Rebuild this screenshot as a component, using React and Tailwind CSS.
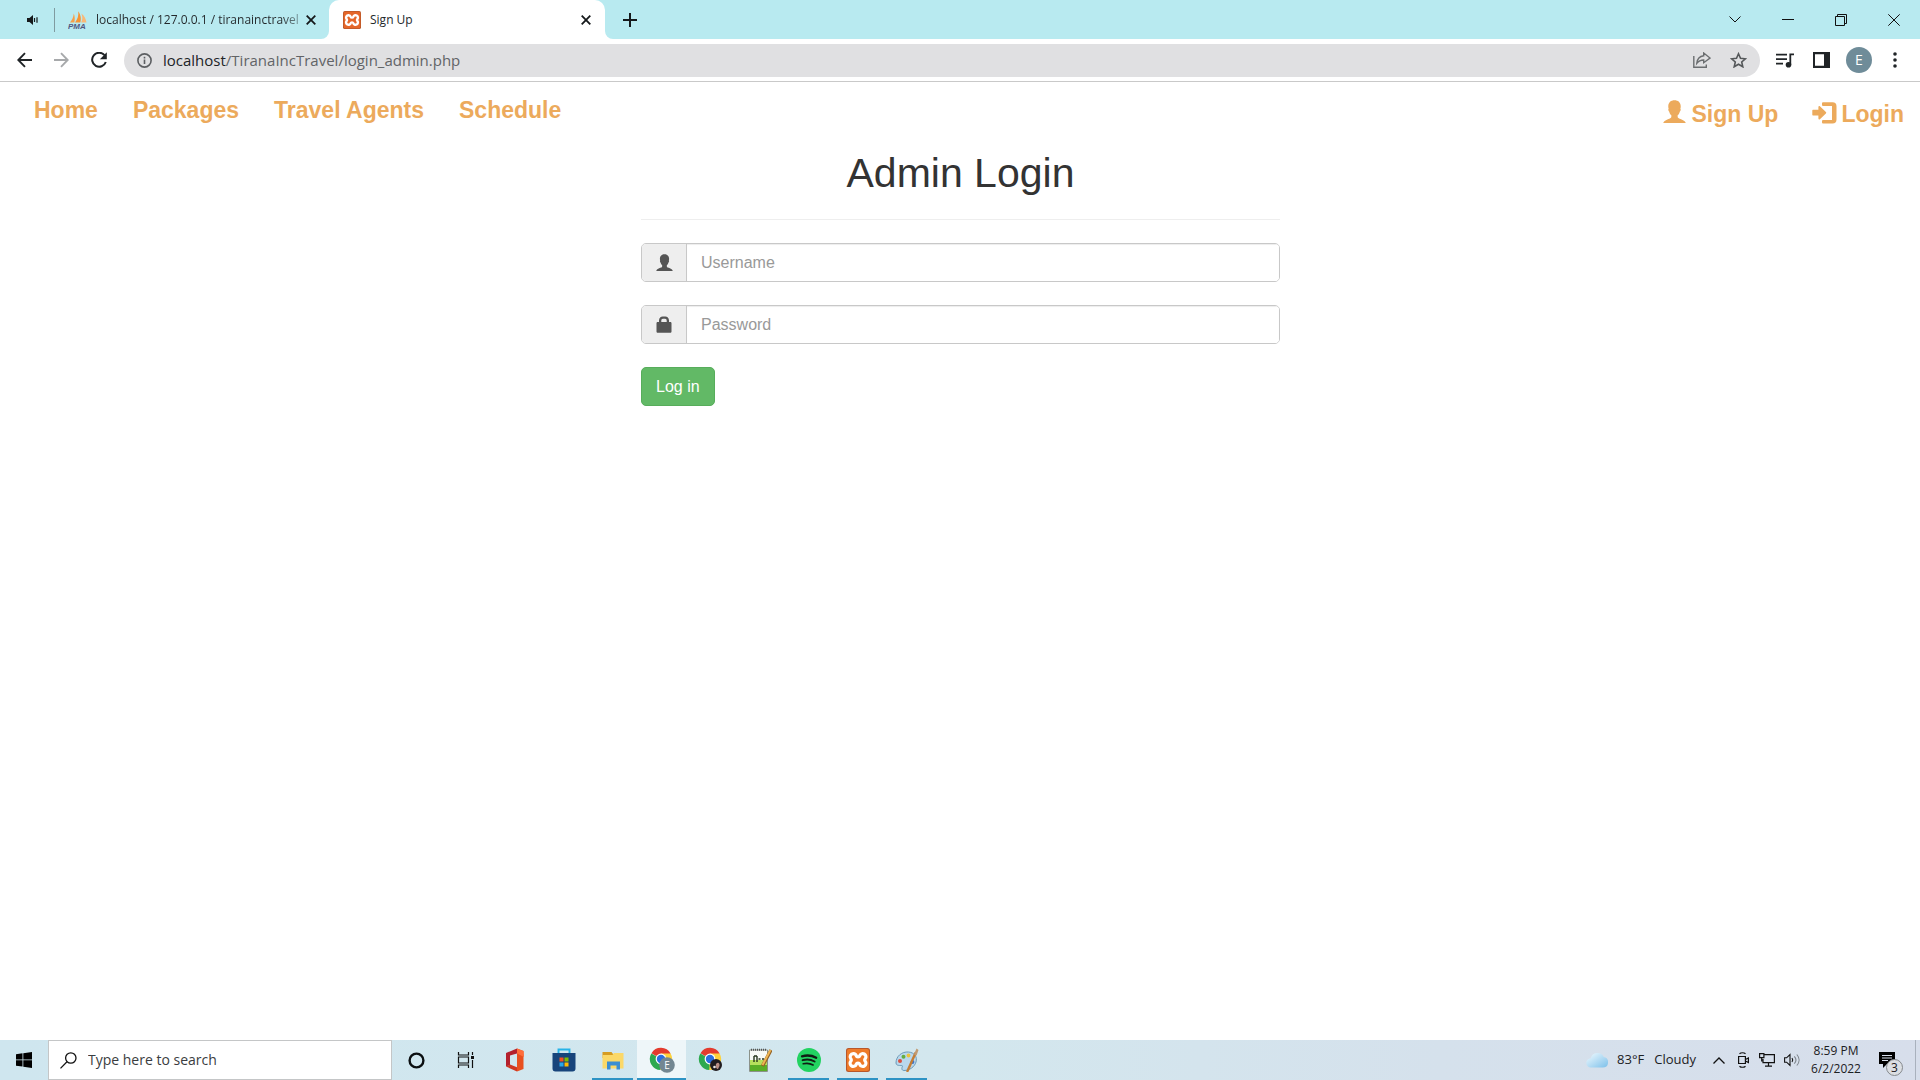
import React from "react";

const UI = "font-['Open_Sans','Noto_Sans',sans-serif]";

function CloseX({ size = 10 }) {
  return (
    <svg width={size} height={size} viewBox="0 0 10 10" fill="none" stroke="#15191b" strokeWidth="1.8">
      <path d="M.7.7l8.6 8.6M9.3.7L.7 9.3" />
    </svg>
  );
}

function Xampp({ size, bg = "#e5672a" }) {
  return (
    <svg width={size} height={size} viewBox="0 0 24 24">
      <rect width="24" height="24" rx="2.5" fill="#b9572a" />
      <rect x="1" y="1" width="22" height="22" rx="2" fill={bg} />
      <path
        transform="translate(12 12) scale(1.15) translate(-12 -12)"
        d="M8 6.500a2.800 2.800 0 0 0-2.200 4.600c.5.500.5 1.300 0 1.800A2.800 2.800 0 1 0 10.600 15.500c.3-1 2.500-1 2.800 0A2.800 2.800 0 1 0 18.200 12.900c-.5-.5-.5-1.300 0-1.800A2.800 2.800 0 1 0 13.400 8.500c-.3 1-2.500 1-2.800 0A2.800 2.800 0 0 0 8 6.500z"
        fill="none"
        stroke="#fff"
        strokeWidth="2.800"
        strokeLinejoin="round"
      />
    </svg>
  );
}

function UserGlyph({ className }) {
  return (
    <svg className={className} viewBox="0 0 24 24" fill="currentColor">
      <path d="M12 .3c3.700 0 6.500 2.200 6.500 6.200 0 1.200-.1 2-.4 2.700.6.300.5 1.900-.6 3-.5 1.700-1.200 3-2.200 3.800v1.600c0 .8.5 1.200 1.500 1.600 2.700 1 6 2.100 6.800 4.400v.8H.400v-.8c.8-2.300 4.100-3.400 6.800-4.400 1-.4 1.500-.8 1.500-1.600V16c-1-.8-1.700-2.100-2.200-3.800-1.100-1.100-1.200-2.700-.6-3-.3-.7-.4-1.500-.4-2.700C5.500 2.500 8.300.3 12 .3z" />
    </svg>
  );
}

function LoginGlyph() {
  return (
    <svg width="25" height="22" viewBox="0 0 25 22" fill="currentColor">
      <path d="M11 .2h9.500a4 4 0 0 1 4 4v13.400a4 4 0 0 1-4 4H11a1 1 0 0 1-1-1v-1.700a1 1 0 0 1 1-1h9V3.900h-9a1 1 0 0 1-1-1V1.200a1 1 0 0 1 1-1z" />
      <path d="M6.400 4.900c0-.9.800-1.200 1.500-.6l6 5.700c.5.500.5 1 0 1.500l-6 5.700c-.7.600-1.500.3-1.500-.6v-3H1.300c-.7 0-1-.4-1-1V8.800c0-.6.300-1 1-1h5.100z" />
    </svg>
  );
}

function LockGlyph() {
  return (
    <svg width="16" height="17" viewBox="0 0 16 17" fill="currentColor">
      <path fillRule="evenodd" d="M3 6V4.600C3 2 4.800.5 6.700.5h2.600C11.200.5 13 2 13 4.600V6h1.200c.8 0 1.300.5 1.300 1.300v8.200c0 .8-.5 1.300-1.300 1.300H1.800c-.8 0-1.300-.5-1.300-1.300V7.300C.5 6.500 1 6 1.800 6zM5.300 6h5.400V4.500c0-1-.7-1.700-1.600-1.700H6.900c-.9 0-1.600.7-1.600 1.700z" />
    </svg>
  );
}

function PmaIcon() {
  return (
    <svg width="20" height="18" viewBox="0 0 20 18">
      <path d="M2 11.500C4 9 5.500 6 5.800 2.500 7 5.500 7 9 6.300 11.500z" fill="#f5a04b" />
      <path d="M7 11.500C9.500 8.500 10.700 5 10.300.3 13 4 13.300 8.500 12.300 11.500z" fill="#f79433" />
      <path d="M13.200 11.500C14.700 8.500 14.600 5.500 13.300 2.500c3 2 4.700 5.500 5.200 9z" fill="#f9b877" />
      <text x="0" y="17.500" fontFamily="Liberation Sans, sans-serif" fontSize="8" fontWeight="700" fontStyle="italic" fill="#51577f">PMA</text>
    </svg>
  );
}

function TabStrip() {
  return (
    <div className={`${UI} flex h-[39px] bg-[linear-gradient(#b8eaf0_50%,#fff_50%)] text-xs text-[#23282b]`}>
      <div className="flex w-[329px] shrink-0 items-center rounded-br-lg bg-[#b8eaf0] pl-[27px]">
        <button aria-label="Mute tab" className="mr-4">
          <svg width="11" height="10" viewBox="0 0 11 10" fill="#15191b">
            <path d="M0 3h2.500L6 0v10L2.500 7H0z" />
            <path d="M7.500 3v4M10 2.200v5.600" stroke="#15191b" strokeWidth="1.200" />
          </svg>
        </button>
        <span className="mr-[13px] h-6 w-px bg-[#7f9ba0]" />
        <PmaIcon />
        <span className="ml-2 flex-1 whitespace-nowrap bg-[linear-gradient(90deg,#23282b_88%,#23282b33)] bg-clip-text text-transparent">
          localhost / 127.0.0.1 / tiranainctravel
        </span>
        <button aria-label="Close tab" className="mr-[13px]"><CloseX /></button>
      </div>
      <div className="flex w-[276px] shrink-0 items-center rounded-t-[10px] bg-white pl-[14px] pr-[14px]">
        <Xampp size={18} />
        <span className="ml-[9px] flex-1">Sign Up</span>
        <button aria-label="Close tab"><CloseX /></button>
      </div>
      <div className="flex flex-1 items-center rounded-bl-lg bg-[#b8eaf0] pl-[18px]">
        <button aria-label="New tab">
          <svg width="14" height="14" viewBox="0 0 14 14" stroke="#15191b" strokeWidth="2"><path d="M7 0v14M0 7h14" /></svg>
        </button>
        <div className="ml-auto flex h-[34px] items-center">
          <button aria-label="Search tabs" className="flex w-[52px] justify-center">
            <svg width="12" height="7" viewBox="0 0 12 7" fill="none" stroke="#111"><path d="M.5.500L6 6 11.500.5" /></svg>
          </button>
          <button aria-label="Minimize" className="flex w-[53px] justify-center">
            <svg width="12" height="2" viewBox="0 0 12 2"><path d="M0 .5h12" stroke="#111" /></svg>
          </button>
          <button aria-label="Restore" className="flex w-[53px] justify-center">
            <svg width="12" height="12" viewBox="0 0 12 12" fill="none" stroke="#111"><path d="M.5 2.500h9v9h-9zM2.500 2.500v-2h9v9h-2" /></svg>
          </button>
          <button aria-label="Close" className="flex w-[53px] justify-center">
            <svg width="12" height="12" viewBox="0 0 12 12" stroke="#111"><path d="M.3.3l11.400 11.400M11.700.3L.3 11.700" /></svg>
          </button>
        </div>
      </div>
    </div>
  );
}

function Toolbar() {
  return (
    <div className={`${UI} flex h-[43px] items-center border-b border-[#c9c9c9] bg-white pl-[17px]`}>
      <button aria-label="Back">
        <svg width="15" height="16" viewBox="0 0 15 16" fill="none" stroke="#202427" strokeWidth="1.900"><path d="M15 8H1.500M8 1.200L1.300 8 8 14.800" /></svg>
      </button>
      <button aria-label="Forward" className="ml-[22px]">
        <svg width="15" height="16" viewBox="0 0 15 16" fill="none" stroke="#a7a9ab" strokeWidth="1.900"><path d="M0 8h13.500M7 1.200L13.700 8 7 14.800" /></svg>
      </button>
      <button aria-label="Reload" className="ml-[22px]">
        <svg width="16" height="16" viewBox="0 0 16 16"><path d="M13.500 3.200A7 7 0 1 0 14.800 10" fill="none" stroke="#202427" strokeWidth="2" /><path d="M15.800.3v6.900H8.900z" fill="#202427" /></svg>
      </button>
      <div className="ml-[17px] flex h-[33px] flex-1 items-center rounded-full bg-[#e0e0e2] pl-[13px] pr-[13px] text-[15px]">
        <svg width="15" height="15" viewBox="0 0 15 15" fill="none" stroke="#5c5f62" strokeWidth="1.600"><circle cx="7.500" cy="7.500" r="6.600" /><path d="M7.500 6.500v4.500M7.500 3.700v1.700" /></svg>
        <span className="ml-[11px] flex-1 text-[#626467]"><span className="text-[#202427]">localhost</span>/TiranaIncTravel/login_admin.php</span>
        <button aria-label="Share">
          <svg width="18" height="16" viewBox="0 0 18 16" fill="none" stroke="#6b6e70" strokeWidth="1.400"><path d="M.8 4v11.200h12.500v-2.700M10.700 1l6.300 5-6.300 4.700V8C7.500 8 5.500 9 3.800 11.300 4.200 7.500 6.500 4.300 10.700 3.800z" /></svg>
        </button>
        <button aria-label="Bookmark" className="ml-[19px]">
          <svg width="17" height="16" viewBox="0 0 17 16" fill="none" stroke="#55585a" strokeWidth="1.600"><path d="M8.500 1.800l2 4.500 4.900.5-3.700 3.200 1.100 4.800-4.300-2.500-4.300 2.500L5.300 10 1.600 6.800l4.900-.5z" /></svg>
        </button>
      </div>
      <button aria-label="Media" className="ml-4">
        <svg width="18" height="15" viewBox="0 0 18 15" fill="none" stroke="#202427" strokeWidth="1.800"><path d="M0 1.700h11M0 6.200h11M0 10.700h7M14.300 12V1.300h3.700" /><circle cx="12.500" cy="11.700" r="2.800" fill="#202427" stroke="none" /></svg>
      </button>
      <button aria-label="Side panel" className="ml-[19px]">
        <svg width="17" height="16" viewBox="0 0 17 16"><path fill="#202427" fillRule="evenodd" d="M0 0h17v16H0zM2 2.200v11.600h9V2.200z" /></svg>
      </button>
      <button aria-label="Profile" className="ml-4 flex size-[26px] items-center justify-center rounded-full bg-[#6f8c99] text-sm text-white">E</button>
      <button aria-label="Menu" className="ml-[21px] mr-[23px]">
        <svg width="4" height="16" viewBox="0 0 4 16" fill="#202427"><circle cx="2" cy="2" r="1.800" /><circle cx="2" cy="8" r="1.800" /><circle cx="2" cy="14" r="1.800" /></svg>
      </button>
    </div>
  );
}

function Field({ icon, label, type }) {
  return (
    <label className="mb-[23px] flex h-[39px] overflow-hidden rounded-[5px] border border-[#c8c8c8]">
      <span className="flex w-[45px] shrink-0 items-center justify-center border-r border-[#c8c8c8] bg-[#eee] text-[#555]">{icon}</span>
      <input
        type={type}
        aria-label={label}
        placeholder={label}
        className="min-w-0 flex-1 bg-white px-[14px] text-base text-[#555] shadow-[inset_0_1px_1px_rgba(0,0,0,0.075)] outline-none placeholder:text-[#999]"
      />
    </label>
  );
}

function Page() {
  return (
    <main className="flex-1 bg-white font-['Liberation_Sans',Arial,sans-serif]">
      <nav className="flex justify-between pl-[34px] pr-4 text-[23px] font-bold leading-[26px] text-[#ecaa5c]">
        <div className="flex gap-[35px] pt-[15px]">
          <a href="#home">Home</a>
          <a href="#packages">Packages</a>
          <a href="#agents">Travel Agents</a>
          <a href="#schedule">Schedule</a>
        </div>
        <div className="flex gap-[34px] pt-[19px]">
          <a href="#signup" className="flex items-start"><UserGlyph className="mr-[6px] size-[23px] -mt-px" />Sign Up</a>
          <a href="#login" className="flex items-start"><span className="mr-1 mt-px"><LoginGlyph /></span>Login</a>
        </div>
      </nav>
      <form className="mx-auto w-1/3 pl-px" onSubmit={(e) => e.preventDefault()}>
        <h1 className="pt-6 text-center text-[41px] leading-[45px] text-[#333]">Admin Login</h1>
        <hr className="mb-[23px] mt-[23px] border-[#eee]" />
        <Field icon={<UserGlyph className="size-[17px]" />} label="Username" type="text" />
        <Field icon={<LockGlyph />} label="Password" type="password" />
        <button className="h-[39px] rounded-[5px] border border-[#57ad5b] bg-[#62b966] px-[14px] text-base text-white">Log in</button>
      </form>
    </main>
  );
}

function Chrome({ children }) {
  return (
    <svg width="26" height="28" viewBox="0 -1 26 28">
      <path d="M12 12L2.500 6.200A11 11 0 0 1 21.600 6.500z" fill="#e33b2e" />
      <path d="M12 12L2.300 6.400A11 11 0 0 0 11.500 23l5-8.500z" fill="#2da94f" />
      <path d="M12 12V6.500h9.600A11 11 0 0 1 11.300 23z" fill="#fdd23c" />
      <circle cx="12" cy="12" r="5.400" fill="#fff" />
      <circle cx="12" cy="12" r="4.200" fill="#2b6fe0" />
      {children}
    </svg>
  );
}

const apps = [
  {
    name: "Cortana",
    icon: <svg width="17" height="17" viewBox="0 0 17 17" fill="none" stroke="#0b0f11" strokeWidth="2.400"><circle cx="8.500" cy="8.500" r="6.900" /></svg>,
  },
  {
    name: "Task view",
    icon: <svg width="18" height="16" viewBox="0 0 18 16" fill="none" stroke="#111" strokeWidth="1.200"><path d="M1.500 0v3h10V0M1.500 5h10v6h-10zM1.500 16v-3h10v3M15.500 0v3M15.500 8v8" /><path d="M14 4h3v3h-3z" fill="#111" stroke="none" /></svg>,
  },
  {
    name: "Office",
    icon: (
      <svg width="20" height="24" viewBox="0 0 20 24">
        <path d="M12 .500L1 5v13.500L5 17V7.500l7-2z" fill="#b3202c" />
        <path d="M12 .5L18.500 3v18L12 23.500z" fill="#e8501f" />
        <path d="M12 .5L18.500 3 19 9l-7-3.500z" fill="#ff6d3a" />
        <path d="M1 18.500l4-2 7 2.700v4.300z" fill="#cf3722" />
      </svg>
    ),
  },
  {
    name: "Store",
    icon: (
      <svg width="24" height="24" viewBox="0 0 24 24">
        <path d="M6.500 6V1.500h11V6" fill="none" stroke="#27b3e8" strokeWidth="1.900" />
        <path d="M.5 5h23v15.500a3 3 0 0 1-3 3h-17a3 3 0 0 1-3-3z" fill="#17447b" />
        <path fill="#f25022" d="M7.500 9.500h4v4h-4z" /><path fill="#7fba00" d="M12.500 9.500h4v4h-4z" /><path fill="#28a8ea" d="M7.500 14.500h4v4h-4z" /><path fill="#ffb900" d="M12.500 14.500h4v4h-4z" />
      </svg>
    ),
  },
  {
    name: "File Explorer",
    open: true,
    icon: (
      <svg width="22" height="19" viewBox="0 0 22 19">
        <path d="M.5 1h9l1.500 2H21v4H.5z" fill="#d69c22" />
        <path d="M.5 4h10l1.500-2h9.500v15.500H.5z" fill="#fbd868" />
        <path d="M5 10.500h13v8h-3.500v-4h-6v4H5z" fill="#3c8ed2" />
      </svg>
    ),
  },
  {
    name: "Chrome E",
    open: true,
    active: true,
    icon: (
      <Chrome>
        <circle cx="18" cy="18" r="7.800" fill="#738792" />
        <text x="18" y="21.500" textAnchor="middle" fontFamily="Open Sans, sans-serif" fontSize="10" fill="#fff">E</text>
      </Chrome>
    ),
  },
  {
    name: "Chrome",
    icon: (
      <Chrome>
        <circle cx="18" cy="18" r="6" fill="#211d20" />
        <path d="M18 17c2-2.500 4-1 3.500 2l-1.500 3c-2 0-2.500-2.500-2-5z" fill="#b98d84" />
        <circle cx="16.500" cy="20" r="1.300" fill="#e8e5e5" />
      </Chrome>
    ),
  },
  {
    name: "Notepad++",
    icon: (
      <svg width="24" height="25" viewBox="0 0 24 25">
        <path d="M1.500 2h18v21.500h-18z" fill="#f8faf5" stroke="#8b928a" />
        <path d="M2 12h17v11H2z" fill="#b5e05c" /><path d="M2 17h17v6H2z" fill="#59ae27" />
        <path d="M3 1.800h16" stroke="#555" strokeWidth="2" strokeDasharray="1 1" />
        <path d="M6 8v6M9 8v6M6 8h3M10.500 11h2M14 11h2" stroke="#26351d" strokeWidth="1.400" />
        <path d="M23 2L14.500 18" stroke="#936226" strokeWidth="3.400" /><path d="M22.500 2L14.500 17" stroke="#efb653" strokeWidth="2" />
      </svg>
    ),
  },
  {
    name: "Spotify",
    open: true,
    icon: (
      <svg width="24" height="24" viewBox="0 0 24 24" fill="none" stroke="#101c14" strokeLinecap="round">
        <circle cx="12" cy="12" r="12" fill="#22d361" stroke="none" />
        <path d="M5 8.300c5-1.400 10-.9 14.200 1.500" strokeWidth="2.300" /><path d="M5.600 12.200c4.300-1.200 8.500-.7 12 1.300" strokeWidth="1.900" /><path d="M6.200 15.800c3.600-.9 6.800-.6 9.900 1.200" strokeWidth="1.600" />
      </svg>
    ),
  },
  { name: "XAMPP", open: true, icon: <Xampp size={24} bg="#ee7b2a" /> },
  {
    name: "Paint",
    open: true,
    icon: (
      <svg width="24" height="24" viewBox="0 0 24 24">
        <path d="M1 15C1 8 7 3.500 13.500 4c6 .5 9 5 7.500 10-1.500 5-6.500 8.500-12 8.500-2.500 0-2.500-2.500-1.500-4C8.500 16.500 1 19 1 15z" fill="#b9d8ec" stroke="#6c9ab8" />
        <circle cx="5" cy="13" r="2" fill="#d9503f" /><circle cx="8.500" cy="8.700" r="2" fill="#65ad42" /><circle cx="13.500" cy="7.500" r="1.900" fill="#ecc23d" /><circle cx="17.500" cy="14" r="1.900" fill="#3d76cc" />
        <path d="M20.500 5L12.500 23" stroke="#c57d35" strokeWidth="2.400" strokeLinecap="round" /><path d="M19 6.500L21.500.5l2 1.500-2 5.500z" fill="#c19a72" />
      </svg>
    ),
  },
];

function Taskbar() {
  return (
    <footer className={`${UI} flex h-10 shrink-0 items-center bg-[linear-gradient(90deg,#cfe6ef,#d3e7ee_50%,#d5e1ec_75%,#d7deeb)] text-[#1c2023]`}>
      <button aria-label="Start" className="flex w-12 shrink-0 justify-center">
        <svg width="16" height="16" viewBox="0 0 16 16" fill="#000"><path d="M0 2.200l6.500-.9v6.200H0zM7.300 1.200L16 0v7.500H7.300zM0 8.300h6.500v6.300L0 13.700zM7.300 8.300H16V16l-8.700-1.200z" /></svg>
      </button>
      <label className="flex h-10 w-[344px] shrink-0 items-center border border-[#c4c6c7] bg-white pl-[11px]">
        <svg width="17" height="17" viewBox="0 0 17 17" fill="none" stroke="#111" strokeWidth="1.300"><circle cx="10.800" cy="6" r="5.200" /><path d="M7 9.800L.5 16.400" /></svg>
        <input aria-label="Search" placeholder="Type here to search" className="ml-[11px] min-w-0 flex-1 text-sm outline-none placeholder:text-[#3a3d40]" />
      </label>
      {apps.map((a) => (
        <button key={a.name} aria-label={a.name} className={`relative flex h-10 w-[49px] shrink-0 items-center justify-center ${a.active ? "bg-[#eef6f9]" : ""}`}>
          {a.icon}
          {a.open && <span className={`absolute bottom-0 h-[2px] bg-[#2e93c4] ${a.active ? "inset-x-0" : "inset-x-1"}`} />}
        </button>
      ))}
      <div className="ml-auto flex h-10 shrink-0 items-center">
        <svg width="22" height="16" viewBox="0 0 22 16">
          <defs><linearGradient id="cloud" x1="0" y1="0" x2="1" y2="1"><stop stopColor="#f2fbff" /><stop offset="1" stopColor="#7cc0ea" /></linearGradient></defs>
          <path d="M5 15.500a4.600 4.600 0 0 1-.3-9.200A7 7 0 0 1 17.800 5a5.300 5.300 0 0 1-1 10.500z" fill="url(#cloud)" />
        </svg>
        <span className="ml-[9px] text-[13px]">83°F</span>
        <span className="ml-[10px] text-[13px]">Cloudy</span>
        <button aria-label="Show hidden icons" className="ml-[9px] flex w-7 justify-center">
          <svg width="12" height="7" viewBox="0 0 12 7" fill="none" stroke="#111" strokeWidth="1.300"><path d="M.5 6.500L6 1l5.500 5.500" /></svg>
        </button>
        <span className="flex w-5 justify-center">
          <svg width="11" height="16" viewBox="0 0 11 16" fill="none" stroke="#111" strokeWidth="1.200"><path d="M.6 4.500h6.800v7H.6zM7.400 7.500L10.400 6v4.500L7.400 9M1.500 1.800C3 .4 6 .4 7.500 1.800M1.500 14.200c1.500 1.400 4.500 1.400 6 0" /></svg>
        </span>
        <span className="flex w-7 justify-center">
          <svg width="16" height="14" viewBox="0 0 16 14" fill="none" stroke="#111" strokeWidth="1.200"><path d="M5 1.600h10.400v8H4V6M9.500 9.600v3.600M6 13.200h7M.6.6h4.300v4H.6zM2.700 4.600v4" /></svg>
        </span>
        <span className="flex w-[22px] justify-center">
          <svg width="17" height="14" viewBox="0 0 17 14" fill="none" stroke="#111" strokeWidth="1.100"><path d="M.6 4.800h2L6 1.500v11L2.600 9.200h-2zM8 5c.9 1.200.9 2.800 0 4" /><path d="M10.300 3.300c2 2.200 2 5.200 0 7.400M12.800 1.500c3 3.300 3 7.700 0 11" stroke="#7e858c" /></svg>
        </span>
        <div className="w-[66px] text-center text-xs leading-[18px]"><div>8:59 PM</div><div>6/2/2022</div></div>
        <button aria-label="Notifications" className="relative ml-[9px] w-[37px]">
          <svg className="ml-px" width="16" height="16" viewBox="0 0 16 16"><path d="M0 0h16v12H8l-4 4v-4H0z" fill="#000" /><path d="M3 3.500h10M3 6h10M3 8.500h6" stroke="#d7deeb" /></svg>
          <span className="absolute left-2 top-[7px] flex size-[17px] items-center justify-center rounded-full border border-[#85898d] bg-[#dcdfe3] text-xs">3</span>
        </button>
        <span className="mr-1 h-10 w-px bg-[#a9b1bd]" />
      </div>
    </footer>
  );
}

export default function App() {
  return (
    <div className="flex min-h-screen flex-col bg-white">
      <header>
        <TabStrip />
        <Toolbar />
      </header>
      <Page />
      <Taskbar />
    </div>
  );
}
